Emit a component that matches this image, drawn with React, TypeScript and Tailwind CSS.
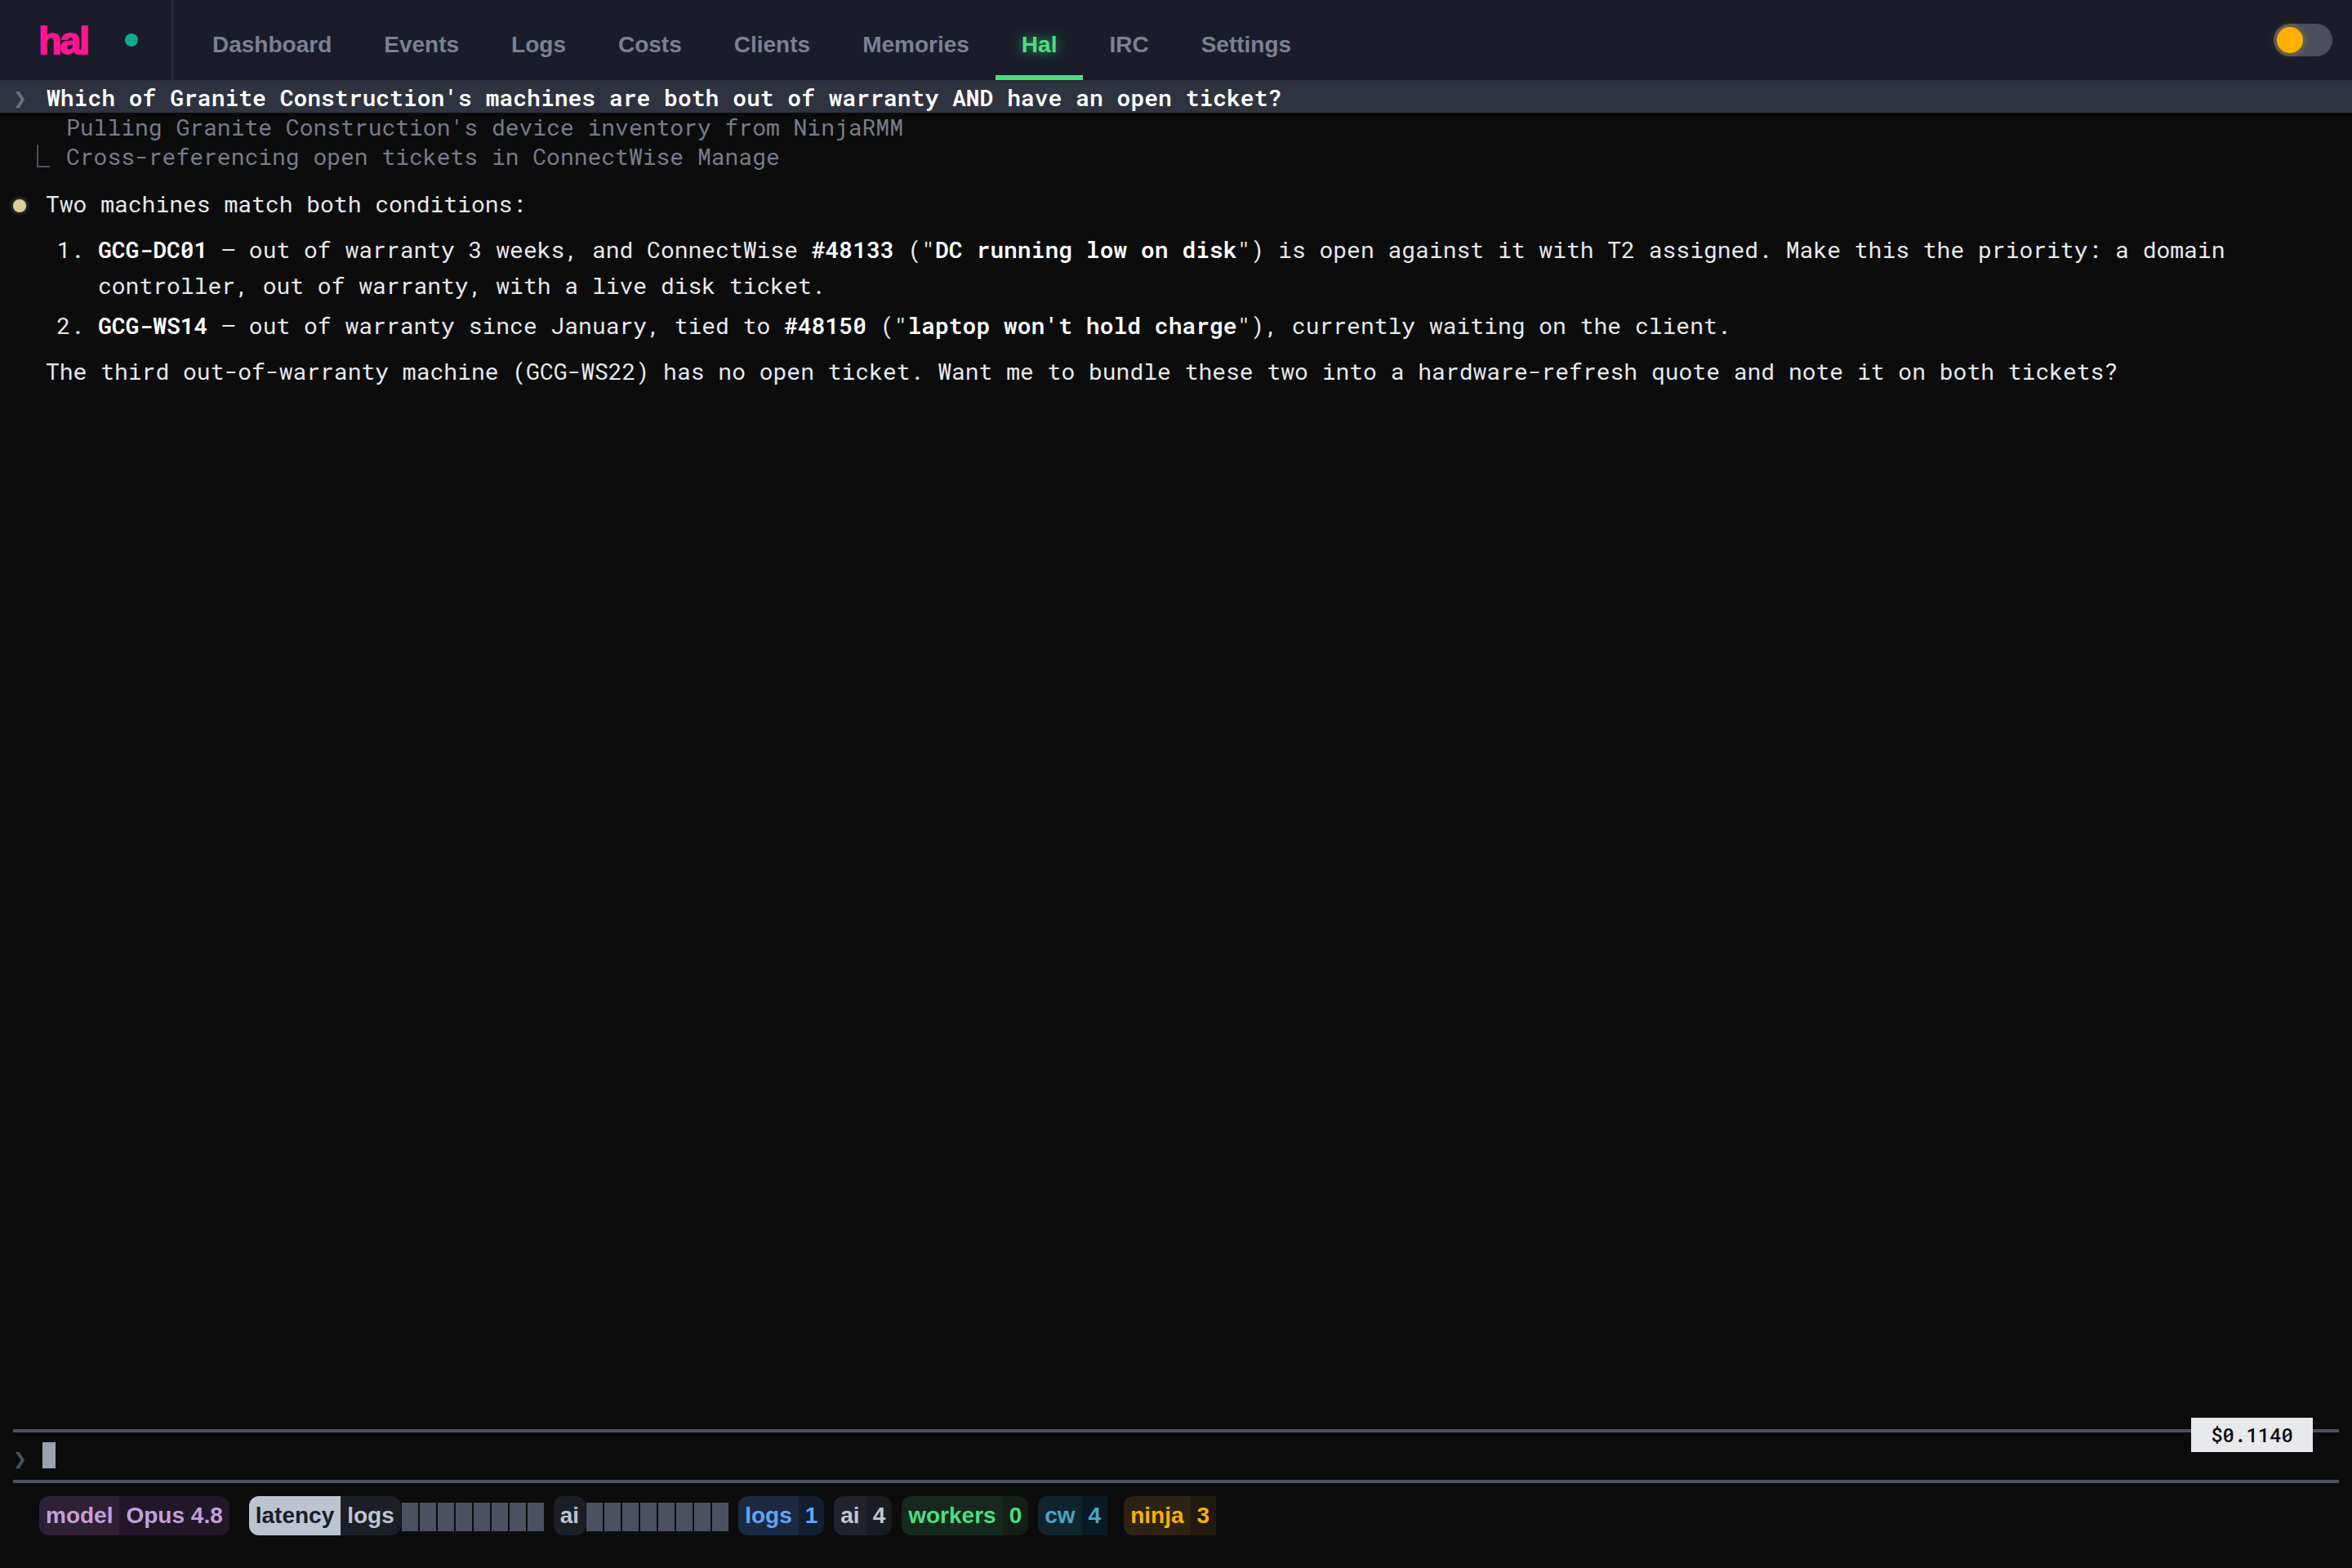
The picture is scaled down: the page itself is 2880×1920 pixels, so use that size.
const navItems = ["Dashboard", "Events", "Logs", "Costs", "Clients", "Memories", "Hal", "IRC", "Settings"]

function Pill({ left, right, leftCls, rightCls, square }: { left: string; right?: string; leftCls: string; rightCls?: string; square?: boolean }) {
  return (
    <div className="flex h-12 font-bold text-[28px] leading-[48px]">
      <span className={`px-2 h-12 ${right ? "rounded-l-xl" : "rounded-xl"} ${leftCls}`}>{left}</span>
      {right && <span className={`px-2 h-12 ${square ? "" : "rounded-r-xl"} ${rightCls}`}>{right}</span>}
    </div>
  )
}

function Bars() {
  return (
    <div className="flex gap-[2px] mt-2 -ml-[11px]">
      {[0, 1, 2, 3, 4, 5, 6, 7].map((i) => (
        <div key={i} className="w-[20px] h-[35px] bg-[#4b5160]" />
      ))}
    </div>
  )
}

export default function App() {
  return (
    <div className="w-[2880px] h-[1920px] flex flex-col bg-[#0c0c0d] overflow-hidden font-['Liberation_Sans',Arial,sans-serif]">
      <header className="h-[98px] flex items-stretch bg-[#1a1d29] shrink-0">
        <div className="w-[212px] flex items-center border-r-2 border-[#2d313d] pl-[47px]">
          <span className="text-[#ff1493] font-bold text-[47px] leading-none tracking-[-2.4px] [-webkit-text-stroke:1.5px_#ff1493]">hal</span>
          <span className="w-4 h-4 rounded-full bg-[#14a890] ml-[45px]" />
        </div>
        <nav className="flex pl-4">
          {navItems.map((item) => (
            <div key={item} className={`px-8 pt-[18px] flex items-center text-[28px] font-bold border-b-[6px] ${item === "Hal" ? "text-[#4ade80] border-[#4ade80] [text-shadow:0_0_14px_rgba(74,222,128,0.7)]" : "text-[#7b8192] border-transparent"}`}>
              {item}
            </div>
          ))}
        </nav>
        <div className="ml-auto mr-6 self-center relative w-[72px] h-10 rounded-full bg-[#4b4f5c]">
          <div className="absolute left-1 top-1 w-8 h-8 rounded-full bg-[#ffb000] shadow-[0_0_8px_rgba(255,176,0,0.5)]" />
        </div>
      </header>

      <main className="flex-1 flex flex-col font-['Roboto_Mono','Liberation_Mono',monospace] text-[28px] text-[#e8e9ed]">
        <div className="h-10 flex items-center bg-[#2f333f] border-t-4 border-[#2b2f3a] pl-[16px] shrink-0">
          <span className="w-[41px] text-[#6b7280] leading-none">❯</span>
          <span className="font-semibold text-white">Which of Granite Construction's machines are both out of warranty AND have an open ticket?</span>
        </div>
        <div className="pl-[81px] text-[#767c8b] leading-9 relative">
          <div>Pulling Granite Construction's device inventory from NinjaRMM</div>
          <div>Cross-referencing open tickets in ConnectWise Manage</div>
          <div className="absolute left-[45px] top-[39px] w-[16px] h-[28px] border-l-2 border-b-2 border-[#4b5160]" />
        </div>
        <div className="flex items-center mt-[22px] pl-4 leading-9">
          <span className="w-4 h-4 rounded-full bg-[#d9cfa0] shadow-[0_0_6px_rgba(217,207,160,0.5)] mt-[3px]" />
          <span className="ml-6">Two machines match both conditions:</span>
        </div>
        <ol className="pl-[120px] mt-[16px] leading-[44px] list-decimal flex flex-col gap-[5px] w-[2760px]">
          <li>
            <b className="font-semibold text-white">GCG-DC01</b> — out of warranty 3 weeks, and ConnectWise <b className="font-semibold text-white">#48133</b> ("<b className="font-semibold text-white">DC running low on disk</b>") is open against it with T2 assigned. Make this the priority: a domain controller, out of warranty, with a live disk ticket.
          </li>
          <li>
            <b className="font-semibold text-white">GCG-WS14</b> — out of warranty since January, tied to <b className="font-semibold text-white">#48150</b> ("<b className="font-semibold text-white">laptop won't hold charge</b>"), currently waiting on the client.
          </li>
        </ol>
        <p className="pl-14 mt-[12px] leading-[44px]">The third out-of-warranty machine (GCG-WS22) has no open ticket. Want me to bundle these two into a hardware-refresh quote and note it on both tickets?</p>

        <div className="mt-auto mx-4 shrink-0 relative">
          <div className="absolute right-8 top-[-14px] h-[42px] px-6 flex items-center bg-[#e8e9ed] text-[#0c0c0d] text-2xl font-medium">$0.1140</div>
          <div className="h-[62px] border-t-4 border-[#4b5160] flex items-start">
            <span className="w-9 text-[#4b5160] leading-none mt-[18px]">❯</span>
            <div className="w-4 h-8 mt-3 bg-[#9aa1b0]" />
          </div>
          <div className="h-[4px] bg-[#4b5160]" />
          <div className="h-[104px] pl-8 pt-4 flex items-start gap-3 font-['Liberation_Sans',Arial,sans-serif]">
            <Pill left="model" right="Opus 4.8" leftCls="bg-[#2e2035] text-[#c39fd8]" rightCls="bg-[#221729] text-[#c39fd8]" />
            <div className="ml-3">
              <Pill left="latency" right="logs" leftCls="bg-[#bcc4d2] text-[#1a1d29]" rightCls="bg-[#1c1f26] text-[#bcc4d2]" />
            </div>
            <Bars />
            <Pill left="ai" leftCls="bg-[#1c1f26] text-[#bcc4d2]" />
            <Bars />
            <Pill left="logs" right="1" leftCls="bg-[#1b2a42] text-[#60a5fa]" rightCls="bg-[#141e30] text-[#60a5fa]" />
            <Pill left="ai" right="4" leftCls="bg-[#22242b] text-[#c3c7d0]" rightCls="bg-[#1b1c21] text-[#c3c7d0]" />
            <Pill left="workers" right="0" leftCls="bg-[#17291e] text-[#4ade80]" rightCls="bg-[#122015] text-[#4ade80]" />
            <Pill left="cw" right="4" leftCls="bg-[#10242d] text-[#4ba3c7]" rightCls="bg-[#0a1a24] text-[#4ba3c7]" square />
            <div className="ml-2">
              <Pill left="ninja" right="3" leftCls="bg-[#2c2314] text-[#ffb000]" rightCls="bg-[#211a0e] text-[#ffb000]" square />
            </div>
          </div>
        </div>
      </main>
    </div>
  )
}
